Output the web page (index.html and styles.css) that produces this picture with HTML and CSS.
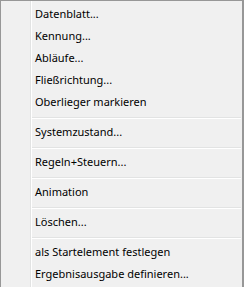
FILE: index.html
```html
<!DOCTYPE html>
<html lang="de">
<head>
  <meta charset="utf-8">
  <link rel="stylesheet" href="styles.css">
</head>
<body>
  <div class="menu">
    <div class="gutter"></div>
    <ul class="items">
      <li class="item">Datenblatt...</li>
      <li class="item">Kennung...</li>
      <li class="item">Abläufe...</li>
      <li class="item">Fließrichtung...</li>
      <li class="item">Oberlieger markieren</li>
      <li class="sep"></li>
      <li class="item">Systemzustand...</li>
      <li class="sep"></li>
      <li class="item">Regeln+Steuern...</li>
      <li class="sep"></li>
      <li class="item">Animation</li>
      <li class="sep"></li>
      <li class="item">Löschen...</li>
      <li class="sep"></li>
      <li class="item">als Startelement festlegen</li>
      <li class="item">Ergebnisausgabe definieren...</li>
    </ul>
  </div>
</body>
</html>
```

FILE: styles.css
```css
:root {
  --menu-bg: #f0f0f0;
  --menu-border: #979797;
  --line-dark: #e2e3e3;
  --line-light: #ffffff;
  --text: #000000;
}

* {
  box-sizing: border-box;
}

html, body {
  margin: 0;
  width: 244px;
  height: 287px;
  overflow: hidden;
  background: var(--menu-bg);
}

.menu {
  display: flex;
  height: 287px;
  border-top: 1px solid var(--menu-border);
  border-left: 1px solid var(--menu-border);
  border-right: 2px solid var(--menu-border);
  background: var(--menu-bg);
  font-family: "Noto Sans", "Open Sans", sans-serif;
  font-size: 11px;
  color: var(--text);
}

.gutter {
  width: 30px;
  flex: none;
  border-right: 1px solid var(--line-dark);
  box-shadow: 1px 0 0 var(--line-light);
}

.items {
  list-style: none;
  margin: 0;
  padding: 2px 1px 0 1px;
  flex: 1;
  display: flex;
  flex-direction: column;
}

.item {
  height: 22px;
  line-height: 22px;
  padding-left: 3px;
  white-space: nowrap;
}

.sep {
  height: 8px;
  padding-top: 4px;
}

.sep::before {
  content: "";
  display: block;
  border-top: 1px solid var(--line-dark);
  border-bottom: 1px solid var(--line-light);
}
```
